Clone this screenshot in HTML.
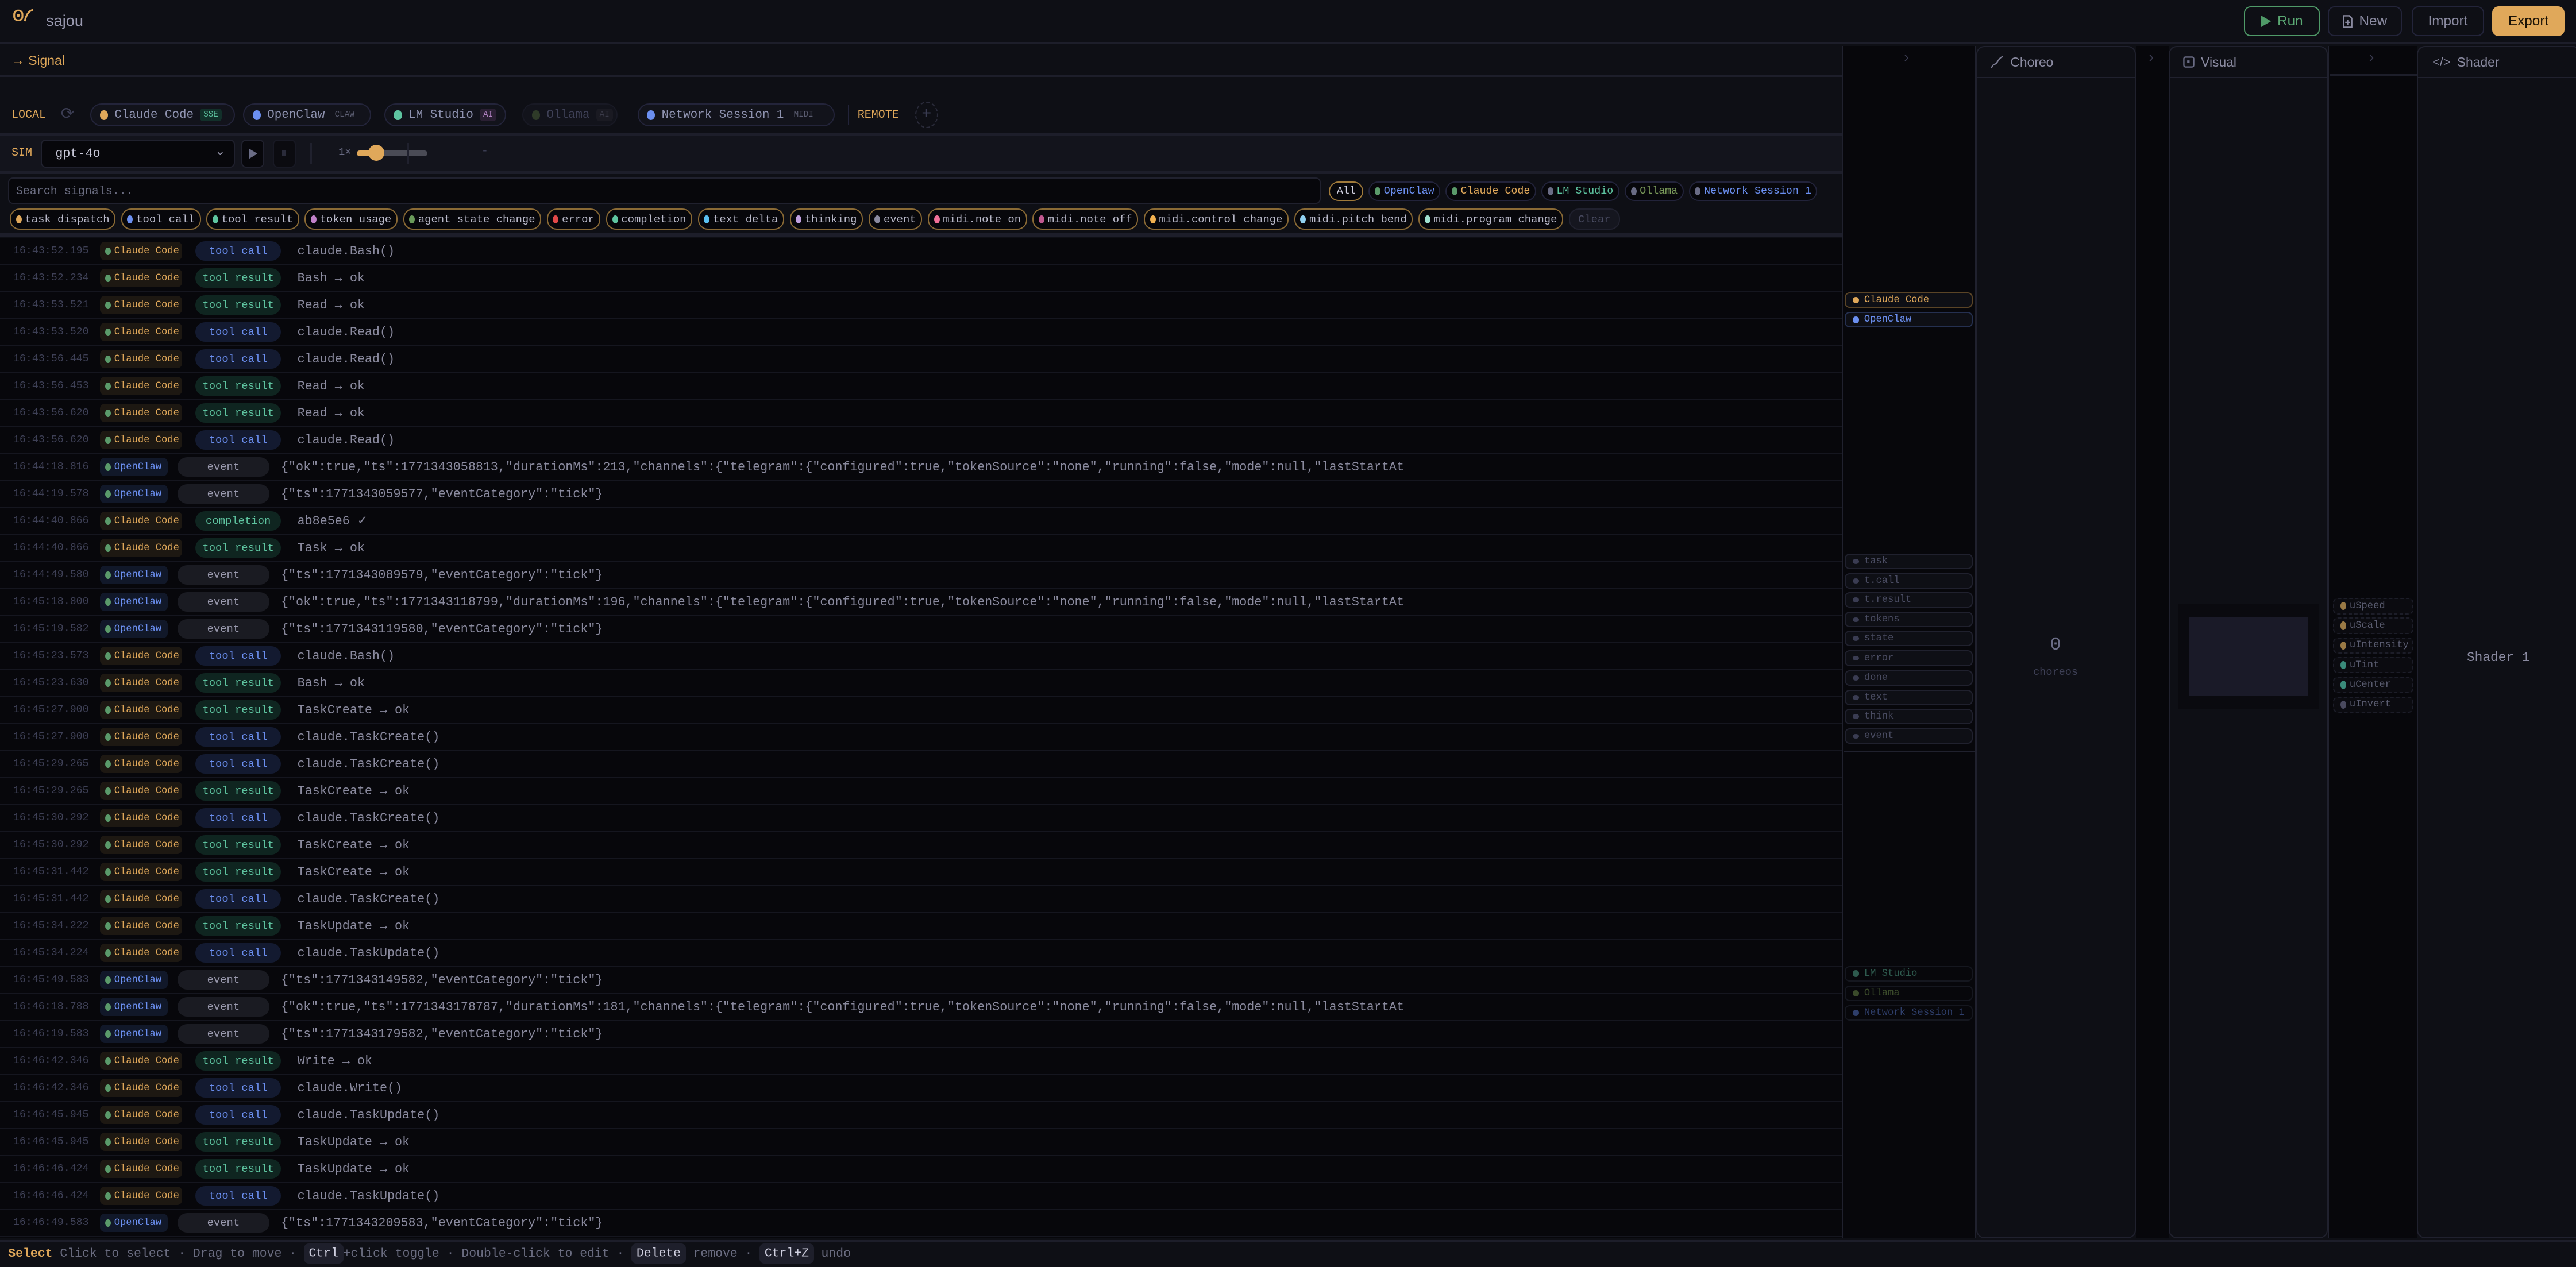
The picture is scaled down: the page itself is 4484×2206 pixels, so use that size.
<!DOCTYPE html>
<html><head><meta charset="utf-8"><style>
*{box-sizing:border-box;margin:0;padding:0}
html,body{width:4484px;height:2206px;overflow:hidden;background:#0e0f15}
#root{zoom:2.8597;width:1568px;height:771.4px;position:relative;font-family:"Liberation Mono",monospace;color:#9a9aae;background:#0e0f15}
.a{position:absolute}
.sans{font-family:"Liberation Sans",sans-serif}
.top{left:0;top:0;width:1568px;height:27px;border-bottom:1.5px solid #1d1e2a;background:#0e0f15}
.btn{position:absolute;top:4px;height:18px;border:1px solid #23243a;border-radius:4px;font:8.5px "Liberation Sans",sans-serif;color:#8a8aa0;display:flex;align-items:center;justify-content:center;gap:4px;background:#0e0f15}
.sig{left:0;top:27px;width:1121px;height:728px;background:#0e0f15}
.chip{position:absolute;top:63px;height:14px;border:1px solid #23243a;border-radius:7px;background:#12131b;font-size:7.3px;display:flex;align-items:center;padding:0 5px;gap:4px;color:#8f93b0;white-space:nowrap;overflow:hidden}
.chip i{width:5px;height:6px;border-radius:50%;display:inline-block;flex:none}
.chip b{font-weight:normal;font-size:5px;padding:1px 2px;border-radius:2px}
.fc{display:inline-flex;align-items:center;height:13px;border:1px solid #8a6a35;border-radius:6px;background:#07070b;font-size:6.6px;color:#b8b8c8;padding:0 3px;gap:2px;margin-right:3.4px;white-space:nowrap}
.fc i,.sc i{width:3.5px;height:5px;border-radius:50%;display:inline-block;flex:none}
.sc{display:inline-flex;align-items:center;height:12px;border:1px solid #22233a;border-radius:6px;background:#07070b;font-size:6.4px;padding:0 3px;gap:2px;margin-right:3.2px;white-space:nowrap}
.list{left:0;top:145px;width:1121px;height:609px;background:#07070b;overflow:hidden}
.r{height:16.44px;border-bottom:1px solid #15161f;display:flex;align-items:center;white-space:nowrap}
.t{width:53px;margin-left:8px;font-size:6.4px;color:#3e4056}
.s{display:inline-flex;align-items:center;gap:2px;height:11px;border-radius:3px;font-size:6px;padding:0 2px 0 3px;white-space:nowrap;overflow:hidden}
.s i{width:3.5px;height:4.5px;border-radius:50%;background:#5a9a6a;display:inline-block;flex:none}
.cc{background:#1d1812;color:#e0a85a;width:50px}
.oc{background:#111829;color:#6b8ff0;width:41px}
.k{display:inline-flex;align-items:center;justify-content:center;height:12px;border-radius:6px;font-size:6.6px;width:52px}
.cc+.k{margin-left:8px}.oc+.k{margin-left:6px;width:56px}
.tc{background:#131a30;color:#6b8ff0}
.tr{background:#0f2520;color:#5ec4a0}
.ev{background:#1a1b22;color:#9a9aae}
.m{font-size:7.6px;color:#8a8a9e;margin-left:10px}
.oc+.k+.m{margin-left:7px}
.pan{position:absolute;top:28px;height:726px;border:1px solid #20212e;border-radius:5px;background:#0e0f15}
.ph{height:19px;border-bottom:1px solid #20212e;display:flex;align-items:center;padding-left:8px;gap:4px;font:8px "Liberation Sans",sans-serif;color:#8a8aa0}
.dk{position:absolute;top:28px;height:726px;background:#07070b}
.arr{position:absolute;top:30px;font:9px "Liberation Sans",sans-serif;color:#3a3b50}
.sb{position:absolute;left:1123px;width:78px;height:9.5px;border:1px solid #20212e;border-radius:3px;background:#0e0f15;font-size:6px;display:flex;align-items:center;padding-left:4px;gap:3px;color:#4a4c62;white-space:nowrap;overflow:hidden}
.sb i{width:4px;height:3px;border-radius:50%;background:#3a3c52;display:inline-block;flex:none}
.un{position:absolute;left:1420px;width:49px;height:10px;border:1px dashed #1c1d28;border-radius:3px;font-size:6px;display:flex;align-items:center;padding-left:4px;gap:2px;color:#5a5c70;white-space:nowrap}
.un i{width:3.5px;height:5px;border-radius:50%;display:inline-block;flex:none}
.kb{background:#1e1f2b;color:#d0d0e0;padding:2px 3px;border-radius:3px}
</style></head><body><div id="root">

<div class="a top">
  <svg class="a" style="left:8px;top:5px" width="14" height="9" viewBox="0 0 14 9"><rect x="0.6" y="1.5" width="5" height="6" rx="2.3" fill="none" stroke="#e0a85a" stroke-width="1.1"/><circle cx="3.1" cy="4.5" r="0.9" fill="#e0a85a"/><path d="M7 8 C8 4 9 3 10 2 M10 2 L12 1" fill="none" stroke="#e0a85a" stroke-width="1.1"/></svg>
  <div class="a sans" style="left:28px;top:7px;font-size:9.5px;color:#9a9ab0">sajou</div>
  <div class="btn" style="left:1366px;width:46px;border-color:#4f9a68;color:#5aa873"><svg width="6" height="7"><path d="M0 0L6 3.5L0 7Z" fill="#4f9a68"/></svg>Run</div>
  <div class="btn" style="left:1417px;width:45px"><svg width="6" height="8"><path d="M0.5 0.5H4L5.5 2V7.5H0.5Z M3 3V6 M1.5 4.5H4.5" fill="none" stroke="#8a8aa0" stroke-width="0.8"/></svg>New</div>
  <div class="btn" style="left:1468px;width:44px">Import</div>
  <div class="btn" style="left:1517px;width:44px;background:#e0a85a;border-color:#e0a85a;color:#1a1206">Export</div>
</div>

<div class="a sig">
  <div class="a" style="left:0;top:0;width:1121px;height:20px;border-bottom:1.5px solid #1d1e2a"></div>
  <div class="a sans" style="left:7px;top:5px;font-size:8px;color:#e0a85a">→ Signal</div>
</div>
<div class="a" style="left:7px;top:66px;font-size:7px;color:#e0a85a">LOCAL</div>
<div class="a" style="left:37px;top:63px;font-size:10px;color:#3a3c52">⟳</div>
<div class="chip" style="left:55px;width:88px"><i style="background:#e0a85a"></i>Claude Code<b style="background:#12302a;color:#5ec4a0">SSE</b></div>
<div class="chip" style="left:148px;width:78px"><i style="background:#6b8ff0"></i>OpenClaw<b style="color:#5a5c70">CLAW</b></div>
<div class="chip" style="left:234px;width:74px"><i style="background:#5ec4a0"></i>LM Studio<b style="background:#2a1f33;color:#b080c0">AI</b></div>
<div class="chip" style="left:318px;width:58px;color:#3e4056;border-color:#181924"><i style="background:#2e3a28"></i>Ollama<b style="background:#1a1a22;color:#3a3a48">AI</b></div>
<div class="chip" style="left:388px;width:120px"><i style="background:#6b8ff0"></i>Network Session 1<b style="color:#5a5c70">MIDI</b></div>
<div class="a" style="left:516px;top:64px;width:1px;height:12px;background:#23243a"></div>
<div class="a" style="left:522px;top:66px;font-size:7px;color:#e0a85a">REMOTE</div>
<div class="a" style="left:557px;top:62px;width:14px;height:16px;border:1px dashed #2a2b3a;border-radius:50%;color:#3a3c52;font-size:10px;text-align:center;line-height:14px">+</div>

<div class="a" style="left:0;top:81px;width:1121px;height:1.5px;background:#1d1e2a"></div>
<div class="a" style="left:0;top:82.5px;width:1121px;height:22px;background:#13141c"></div>
<div class="a" style="left:7px;top:89px;font-size:7px;color:#e0a85a">SIM</div>
<div class="a" style="left:25px;top:85px;width:118px;height:17px;border:1px solid #20212e;border-radius:3px;background:#07070b;font-size:7.6px;color:#c8c8d8;padding:3.5px 0 0 8px">gpt-4o<span style="position:absolute;right:5px;top:2px;color:#9a9ab0">⌄</span></div>
<div class="a" style="left:147px;top:85px;width:14px;height:17px;border:1px solid #20212e;border-radius:3px;background:#07070b"><svg style="position:absolute;left:4px;top:5px" width="5" height="6"><path d="M0 0L5 3L0 6Z" fill="#6a6c85"/></svg></div>
<div class="a" style="left:166px;top:85px;width:14px;height:17px;border:1px solid #181924;border-radius:3px;background:#0b0b10"><div class="a" style="left:5px;top:6px;width:2px;height:3px;background:#2a2b3a"></div></div>
<div class="a" style="left:189px;top:87px;width:1px;height:13px;background:#20212e"></div>
<div class="a" style="left:206px;top:89px;font-size:6.5px;color:#6a6c85">1×</div>
<div class="a" style="left:217px;top:91.5px;width:43px;height:3.5px;border-radius:2px;background:#4a4b55"></div>
<div class="a" style="left:217px;top:91.5px;width:12px;height:3.5px;border-radius:2px;background:#e0a85a"></div>
<div class="a" style="left:224px;top:88px;width:10px;height:10px;border-radius:50%;background:#e0a85a"></div>
<div class="a" style="left:248px;top:87px;width:1px;height:13px;background:#20212e"></div>
<div class="a" style="left:293px;top:88px;font-size:7px;color:#3a3c52">-</div>
<div class="a" style="left:0;top:104px;width:1121px;height:2px;background:#1d1e2a"></div>

<div class="a" style="left:5px;top:108px;width:799px;height:16px;border:1px solid #20212e;border-radius:3px;background:#07070b;font-size:7px;color:#6a6c80;padding:4px 0 0 4px">Search signals...</div>
<div class="a" style="left:809px;top:110.5px;white-space:nowrap;display:flex">
  <span class="sc" style="border-color:#a07a3a;color:#d0d0e0;padding:0 4px">All</span>
  <span class="sc" style="color:#6b8ff0"><i style="background:#5a9a6a"></i>OpenClaw</span>
  <span class="sc" style="color:#e0a85a"><i style="background:#5a9a6a"></i>Claude Code</span>
  <span class="sc" style="color:#5ec4a0"><i style="background:#6a6c85"></i>LM Studio</span>
  <span class="sc" style="color:#7a9a5a"><i style="background:#6a6c85"></i>Ollama</span>
  <span class="sc" style="color:#6b8ff0"><i style="background:#6a6c85"></i>Network Session 1</span>
</div>
<div class="a" style="left:6px;top:127px;display:flex;white-space:nowrap">
  <span class="fc"><i style="background:#e0a85a"></i>task dispatch</span>
  <span class="fc"><i style="background:#6b8ff0"></i>tool call</span>
  <span class="fc"><i style="background:#5ec4a0"></i>tool result</span>
  <span class="fc"><i style="background:#c080c8"></i>token usage</span>
  <span class="fc"><i style="background:#6a9a5a"></i>agent state change</span>
  <span class="fc"><i style="background:#e04848"></i>error</span>
  <span class="fc"><i style="background:#5ec4a0"></i>completion</span>
  <span class="fc"><i style="background:#5ac0f0"></i>text delta</span>
  <span class="fc"><i style="background:#c0a0e0"></i>thinking</span>
  <span class="fc"><i style="background:#8a8aa0"></i>event</span>
  <span class="fc"><i style="background:#f07098"></i>midi.note on</span>
  <span class="fc"><i style="background:#c05890"></i>midi.note off</span>
  <span class="fc"><i style="background:#f0b050"></i>midi.control change</span>
  <span class="fc"><i style="background:#90d0f0"></i>midi.pitch bend</span>
  <span class="fc"><i style="background:#a0e0d0"></i>midi.program change</span>
  <span class="fc" style="border-color:#20212e;background:#15161f;color:#4a4c62;padding:0 5px">Clear</span>
</div>
<div class="a" style="left:0;top:142px;width:1121px;height:2px;background:#1d1e2a"></div>

<div class="a list">
<div class="r"><span class="t">16:43:52.195</span><span class="s cc"><i></i>Claude Code</span><span class="k tc">tool call</span><span class="m">claude.Bash()</span></div>
<div class="r"><span class="t">16:43:52.234</span><span class="s cc"><i></i>Claude Code</span><span class="k tr">tool result</span><span class="m">Bash → ok</span></div>
<div class="r"><span class="t">16:43:53.521</span><span class="s cc"><i></i>Claude Code</span><span class="k tr">tool result</span><span class="m">Read → ok</span></div>
<div class="r"><span class="t">16:43:53.520</span><span class="s cc"><i></i>Claude Code</span><span class="k tc">tool call</span><span class="m">claude.Read()</span></div>
<div class="r"><span class="t">16:43:56.445</span><span class="s cc"><i></i>Claude Code</span><span class="k tc">tool call</span><span class="m">claude.Read()</span></div>
<div class="r"><span class="t">16:43:56.453</span><span class="s cc"><i></i>Claude Code</span><span class="k tr">tool result</span><span class="m">Read → ok</span></div>
<div class="r"><span class="t">16:43:56.620</span><span class="s cc"><i></i>Claude Code</span><span class="k tr">tool result</span><span class="m">Read → ok</span></div>
<div class="r"><span class="t">16:43:56.620</span><span class="s cc"><i></i>Claude Code</span><span class="k tc">tool call</span><span class="m">claude.Read()</span></div>
<div class="r"><span class="t">16:44:18.816</span><span class="s oc"><i></i>OpenClaw</span><span class="k ev">event</span><span class="m">{"ok":true,"ts":1771343058813,"durationMs":213,"channels":{"telegram":{"configured":true,"tokenSource":"none","running":false,"mode":null,"lastStartAt</span></div>
<div class="r"><span class="t">16:44:19.578</span><span class="s oc"><i></i>OpenClaw</span><span class="k ev">event</span><span class="m">{"ts":1771343059577,"eventCategory":"tick"}</span></div>
<div class="r"><span class="t">16:44:40.866</span><span class="s cc"><i></i>Claude Code</span><span class="k tr">completion</span><span class="m">ab8e5e6 ✓</span></div>
<div class="r"><span class="t">16:44:40.866</span><span class="s cc"><i></i>Claude Code</span><span class="k tr">tool result</span><span class="m">Task → ok</span></div>
<div class="r"><span class="t">16:44:49.580</span><span class="s oc"><i></i>OpenClaw</span><span class="k ev">event</span><span class="m">{"ts":1771343089579,"eventCategory":"tick"}</span></div>
<div class="r"><span class="t">16:45:18.800</span><span class="s oc"><i></i>OpenClaw</span><span class="k ev">event</span><span class="m">{"ok":true,"ts":1771343118799,"durationMs":196,"channels":{"telegram":{"configured":true,"tokenSource":"none","running":false,"mode":null,"lastStartAt</span></div>
<div class="r"><span class="t">16:45:19.582</span><span class="s oc"><i></i>OpenClaw</span><span class="k ev">event</span><span class="m">{"ts":1771343119580,"eventCategory":"tick"}</span></div>
<div class="r"><span class="t">16:45:23.573</span><span class="s cc"><i></i>Claude Code</span><span class="k tc">tool call</span><span class="m">claude.Bash()</span></div>
<div class="r"><span class="t">16:45:23.630</span><span class="s cc"><i></i>Claude Code</span><span class="k tr">tool result</span><span class="m">Bash → ok</span></div>
<div class="r"><span class="t">16:45:27.900</span><span class="s cc"><i></i>Claude Code</span><span class="k tr">tool result</span><span class="m">TaskCreate → ok</span></div>
<div class="r"><span class="t">16:45:27.900</span><span class="s cc"><i></i>Claude Code</span><span class="k tc">tool call</span><span class="m">claude.TaskCreate()</span></div>
<div class="r"><span class="t">16:45:29.265</span><span class="s cc"><i></i>Claude Code</span><span class="k tc">tool call</span><span class="m">claude.TaskCreate()</span></div>
<div class="r"><span class="t">16:45:29.265</span><span class="s cc"><i></i>Claude Code</span><span class="k tr">tool result</span><span class="m">TaskCreate → ok</span></div>
<div class="r"><span class="t">16:45:30.292</span><span class="s cc"><i></i>Claude Code</span><span class="k tc">tool call</span><span class="m">claude.TaskCreate()</span></div>
<div class="r"><span class="t">16:45:30.292</span><span class="s cc"><i></i>Claude Code</span><span class="k tr">tool result</span><span class="m">TaskCreate → ok</span></div>
<div class="r"><span class="t">16:45:31.442</span><span class="s cc"><i></i>Claude Code</span><span class="k tr">tool result</span><span class="m">TaskCreate → ok</span></div>
<div class="r"><span class="t">16:45:31.442</span><span class="s cc"><i></i>Claude Code</span><span class="k tc">tool call</span><span class="m">claude.TaskCreate()</span></div>
<div class="r"><span class="t">16:45:34.222</span><span class="s cc"><i></i>Claude Code</span><span class="k tr">tool result</span><span class="m">TaskUpdate → ok</span></div>
<div class="r"><span class="t">16:45:34.224</span><span class="s cc"><i></i>Claude Code</span><span class="k tc">tool call</span><span class="m">claude.TaskUpdate()</span></div>
<div class="r"><span class="t">16:45:49.583</span><span class="s oc"><i></i>OpenClaw</span><span class="k ev">event</span><span class="m">{"ts":1771343149582,"eventCategory":"tick"}</span></div>
<div class="r"><span class="t">16:46:18.788</span><span class="s oc"><i></i>OpenClaw</span><span class="k ev">event</span><span class="m">{"ok":true,"ts":1771343178787,"durationMs":181,"channels":{"telegram":{"configured":true,"tokenSource":"none","running":false,"mode":null,"lastStartAt</span></div>
<div class="r"><span class="t">16:46:19.583</span><span class="s oc"><i></i>OpenClaw</span><span class="k ev">event</span><span class="m">{"ts":1771343179582,"eventCategory":"tick"}</span></div>
<div class="r"><span class="t">16:46:42.346</span><span class="s cc"><i></i>Claude Code</span><span class="k tr">tool result</span><span class="m">Write → ok</span></div>
<div class="r"><span class="t">16:46:42.346</span><span class="s cc"><i></i>Claude Code</span><span class="k tc">tool call</span><span class="m">claude.Write()</span></div>
<div class="r"><span class="t">16:46:45.945</span><span class="s cc"><i></i>Claude Code</span><span class="k tc">tool call</span><span class="m">claude.TaskUpdate()</span></div>
<div class="r"><span class="t">16:46:45.945</span><span class="s cc"><i></i>Claude Code</span><span class="k tr">tool result</span><span class="m">TaskUpdate → ok</span></div>
<div class="r"><span class="t">16:46:46.424</span><span class="s cc"><i></i>Claude Code</span><span class="k tr">tool result</span><span class="m">TaskUpdate → ok</span></div>
<div class="r"><span class="t">16:46:46.424</span><span class="s cc"><i></i>Claude Code</span><span class="k tc">tool call</span><span class="m">claude.TaskUpdate()</span></div>
<div class="r"><span class="t">16:46:49.583</span><span class="s oc"><i></i>OpenClaw</span><span class="k ev">event</span><span class="m">{"ts":1771343209583,"eventCategory":"tick"}</span></div>
</div>

<!-- right side -->
<div class="dk" style="left:1121px;width:82px;border-left:1px solid #20212e;border-right:1px solid #20212e"></div>
<div class="arr" style="left:1159px">›</div>
<div class="sb" style="top:178px;border-color:#5a4426;color:#e0a85a"><i style="background:#e0a85a;height:4px"></i>Claude Code</div>
<div class="sb" style="top:190px;border-color:#253050;color:#6b8ff0"><i style="background:#6b8ff0;height:4px"></i>OpenClaw</div>
<div class="sb" style="top:337px"><i></i>task</div>
<div class="sb" style="top:349px"><i></i>t.call</div>
<div class="sb" style="top:360.5px"><i></i>t.result</div>
<div class="sb" style="top:372.5px"><i></i>tokens</div>
<div class="sb" style="top:384px"><i></i>state</div>
<div class="sb" style="top:396px"><i></i>error</div>
<div class="sb" style="top:408px"><i></i>done</div>
<div class="sb" style="top:420px"><i></i>text</div>
<div class="sb" style="top:431.5px"><i></i>think</div>
<div class="sb" style="top:443.5px"><i></i>event</div>
<div class="a" style="left:1122px;top:457px;width:80px;height:1px;background:#20212e"></div>
<div class="sb" style="top:588px;background:#07070b;color:#2e5a4e;border-color:#15171f"><i style="background:#2e5a4e;height:4px"></i>LM Studio</div>
<div class="sb" style="top:600px;background:#07070b;color:#3a4a2a;border-color:#15171f"><i style="background:#3a4a2a;height:4px"></i>Ollama</div>
<div class="sb" style="top:612px;background:#07070b;color:#2e3e6a;border-color:#15171f"><i style="background:#2e3e6a;height:4px"></i>Network Session 1</div>

<div class="pan" style="left:1203px;width:97px"><div class="ph"><svg width="8" height="8"><path d="M0.5 7.5C2 4 3 6 4 4S6 1 7.5 0.5" fill="none" stroke="#7a7a90" stroke-width="0.8"/></svg>Choreo</div>
  <div class="a" style="left:0;width:95px;top:358px;text-align:center;font-size:11px;color:#6a6c85">0</div>
  <div class="a" style="left:0;width:95px;top:377px;text-align:center;font-size:6.5px;color:#3e4056">choreos</div>
</div>
<div class="dk" style="left:1300px;width:20px"></div>
<div class="arr" style="left:1308px">›</div>
<div class="pan" style="left:1320px;width:97px"><div class="ph"><svg width="7" height="7"><rect x="0.5" y="0.5" width="6" height="6" rx="1" fill="none" stroke="#6a6c85" stroke-width="0.8"/><rect x="2.5" y="2.5" width="1.5" height="1.5" fill="#6a6c85"/></svg>Visual</div>
  <div class="a" style="left:5px;top:339px;width:86px;height:64px;background:#0a0a0f"></div>
  <div class="a" style="left:11.5px;top:347px;width:73px;height:48px;background:#1a1a28"></div>
</div>
<div class="dk" style="left:1417px;width:54px;border-left:1px solid #20212e"></div>
<div class="a" style="left:1418px;top:45px;width:53px;height:1px;background:#1d1e2a"></div>
<div class="arr" style="left:1442px">›</div>
<div class="un" style="top:364px;background:#0b0b10"><i style="background:#9a7a45"></i>uSpeed</div>
<div class="un" style="top:376px;background:#0b0b10"><i style="background:#9a7a45"></i>uScale</div>
<div class="un" style="top:388px;background:#0b0b10"><i style="background:#9a7a45"></i>uIntensity</div>
<div class="un" style="top:400px;background:#0b0b10"><i style="background:#3a8a7a"></i>uTint</div>
<div class="un" style="top:412px;background:#0b0b10"><i style="background:#3a8a7a"></i>uCenter</div>
<div class="un" style="top:424px;background:#0b0b10"><i style="background:#4a4a5e"></i>uInvert</div>
<div class="pan" style="left:1471px;width:100px"><div class="ph" style="padding-left:9px"><span style="font-size:7.5px">&lt;/&gt;</span>Shader</div>
  <div class="a" style="left:0;width:98px;top:367px;text-align:center;font-size:8px;color:#8a8aa0">Shader 1</div>
</div>

<div class="a" style="left:0;top:755px;width:1568px;height:1.5px;background:#1d1e2a"></div>
<div class="a" style="left:5px;top:759px;font-size:7.5px;color:#6a6c80;white-space:nowrap"><span style="color:#e0a85a;font-weight:bold">Select</span> Click to select · Drag to move · <span class="kb">Ctrl</span>+click toggle · Double-click to edit · <span class="kb">Delete</span> remove · <span class="kb">Ctrl+Z</span> undo</div>
</div></body></html>
